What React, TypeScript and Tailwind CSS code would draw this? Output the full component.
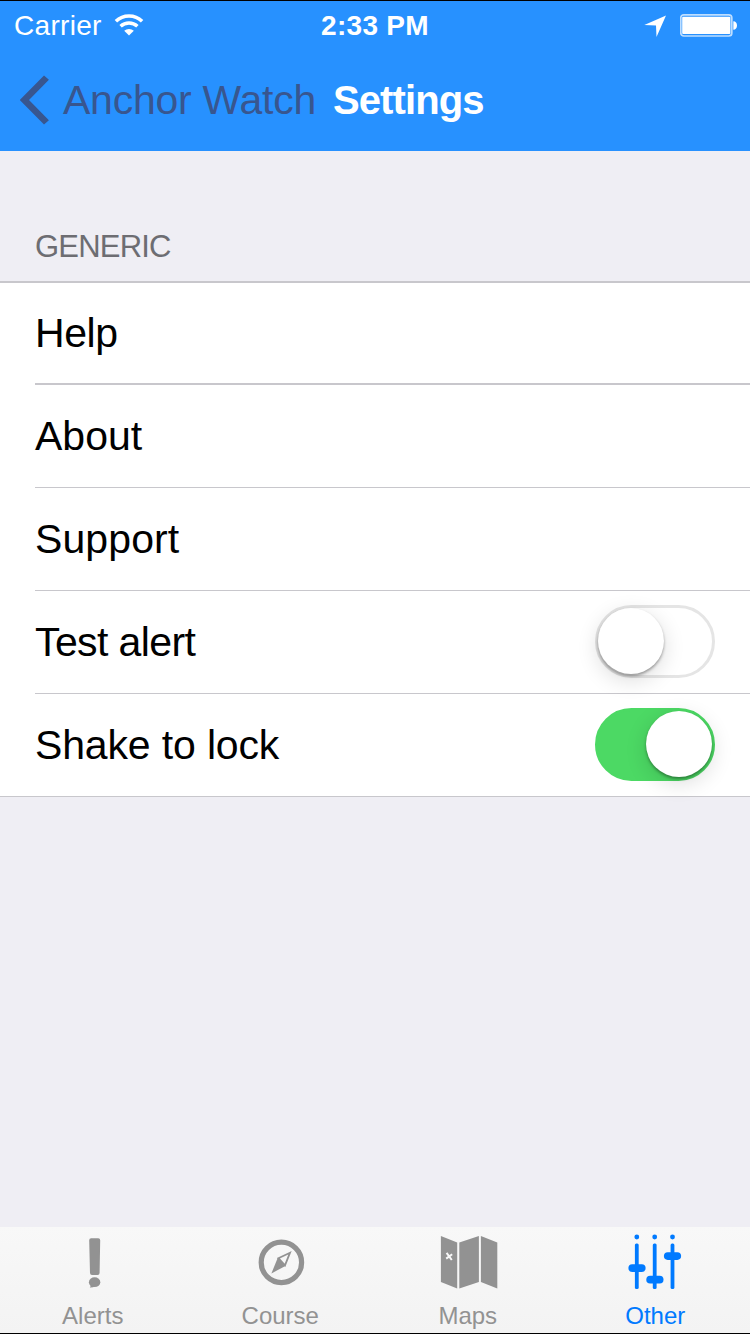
import React, { useState } from "react"

interface SettingRow {
  label: string
  tracking: string
  toggle?: "testAlert" | "shakeToLock"
}

const rows: SettingRow[] = [
  { label: "Help", tracking: "tracking-[-0.4px]" },
  { label: "About", tracking: "tracking-[0px]" },
  { label: "Support", tracking: "tracking-[0.1px]" },
  { label: "Test alert", tracking: "tracking-[-0.6px]", toggle: "testAlert" },
  { label: "Shake to lock", tracking: "tracking-[-0.15px]", toggle: "shakeToLock" },
]

const WifiIcon = () => (
  <svg width="30" height="24" viewBox="0 0 30 24" fill="none" stroke="white">
    <path d="M1.9 8.2A18.8 18.8 0 0 1 28.1 8.2" strokeWidth="3.5" />
    <path d="M6.6 13.2A12.4 12.4 0 0 1 23.4 13.2" strokeWidth="3.5" />
    <path d="M15 22.4L10.2 17.8A7 7 0 0 1 19.8 17.8Z" fill="white" stroke="none" />
  </svg>
)

const LocationIcon = () => (
  <svg width="24" height="24" viewBox="0 0 24 24" fill="white">
    <path d="M1.3 12L23 2.5L13.5 24L13 12.5Z" />
  </svg>
)

const BatteryIcon = () => (
  <svg width="58" height="24" viewBox="0 0 58 24">
    <rect x="0.8" y="1.8" width="51" height="21.2" rx="3" fill="none" stroke="white" strokeOpacity="0.7" strokeWidth="1.7" />
    <rect x="2.2" y="3.8" width="48.2" height="17.2" rx="1" fill="white" />
    <path d="M53.3 8.2C55.6 8.2 57 10 57 12.4S55.6 16.8 53.3 16.8Z" fill="white" />
  </svg>
)

const BackIcon = () => (
  <svg width="30" height="50" viewBox="0 0 30 50" fill="#38568f">
    <path d="M-0.3 25L24 0.4L28.9 4.8L9 25L28.9 45.2L24 49.6Z" />
  </svg>
)

const AlertsIcon = () => (
  <svg width="60" height="72" viewBox="0 0 60 72" fill="currentColor">
    <path d="M27.2 11.2H34.2Q36.3 11.2 36.2 13.4L35.6 46Q35.5 48 33.6 48H28Q26.1 48 26 46L25.2 13.4Q25.1 11.2 27.2 11.2Z" />
    <ellipse cx="30.6" cy="55.2" rx="5.7" ry="4.9" />
    <path d="M26.6 57.2Q27 59.5 25.8 60.5Q29 60.8 31 59Z" />
  </svg>
)

const CourseIcon = () => (
  <svg width="60" height="72" viewBox="0 0 60 72">
    <circle cx="30.4" cy="35.4" r="20.2" fill="none" stroke="currentColor" strokeWidth="5.2" />
    <path d="M39 25.7L27.4 31.2L34 38.4Z" fill="none" stroke="currentColor" strokeWidth="1.8" />
    <path d="M20.4 46.4L26.8 30.8L34.4 39Z" fill="currentColor" />
  </svg>
)

const MapsIcon = () => (
  <svg width="60" height="72" viewBox="0 0 60 72" fill="currentColor">
    <path d="M1.9 9.1L18.2 15.5V61.4L1.9 55Z" />
    <path d="M20.3 15.5L39.9 9.1V55L20.3 61.4Z" />
    <path d="M41.9 9.1L58.3 15.5V61.4L41.9 55Z" />
    <path d="M7.6 25.8L12.8 33M13.2 27.2L7.2 31.6" fill="none" stroke="#f7f7f7" strokeWidth="2" />
  </svg>
)

const OtherIcon = () => (
  <svg width="60" height="72" viewBox="0 0 60 72" fill="currentColor">
    <circle cx="10.8" cy="10" r="2.4" />
    <circle cx="28.7" cy="10" r="2.4" />
    <circle cx="46.5" cy="10" r="2.4" />
    <rect x="8.9" y="16.4" width="3.8" height="45.6" rx="1.5" />
    <rect x="26.8" y="16.4" width="3.8" height="45.6" rx="1.5" />
    <rect x="44.6" y="16.4" width="3.8" height="45.6" rx="1.5" />
    <rect x="2.4" y="37.2" width="17.2" height="7.7" rx="3.8" />
    <rect x="20.3" y="48.8" width="17.2" height="7.7" rx="3.8" />
    <rect x="37.9" y="25.2" width="17.2" height="7.7" rx="3.8" />
  </svg>
)

const tabs = [
  { label: "Alerts", icon: <AlertsIcon /> },
  { label: "Course", icon: <CourseIcon /> },
  { label: "Maps", icon: <MapsIcon /> },
  { label: "Other", icon: <OtherIcon /> },
]

const Switch: React.FC<{ label: string; on: boolean; onChange: () => void }> = ({ label, on, onChange }) => (
  <button
    role="switch"
    aria-checked={on}
    aria-label={label}
    onClick={onChange}
    className={`mb-[2px] flex h-[73px] w-[120px] items-center rounded-full border-[3px] ${
      on ? "justify-end border-[#4cd964] bg-[#4cd964]" : "justify-start border-[#e5e5e5] bg-white"
    }`}
  >
    <span className="size-[66px] rounded-full bg-white shadow-[0_2px_3px_rgba(0,0,0,0.35),0_6px_22px_rgba(0,0,0,0.14)]" />
  </button>
)

export default function App() {
  const [activeTab, setActiveTab] = useState("Other")
  const [settings, setSettings] = useState({ testAlert: false, shakeToLock: true })

  return (
    <div className="flex h-[1334px] w-[750px] flex-col overflow-hidden border-y border-black bg-[#efeef4] font-['Liberation_Sans',Arial,sans-serif] text-black">
      <header className="h-[150px] shrink-0 bg-[#2791ff] text-white">
        {/* Status bar */}
        <div className="grid h-[50px] grid-cols-3 items-center text-[28px] leading-8">
          <div className="flex items-center pl-[14px]">
            <span className="tracking-[0.3px]">Carrier</span>
            <span className="ml-3 -mt-[2px]">
              <WifiIcon />
            </span>
          </div>
          <div className="text-center font-bold tracking-[0.3px]">2:33 PM</div>
          <div className="-mt-[2px] flex items-center justify-end gap-[13px] pr-[12px]">
            <LocationIcon />
            <BatteryIcon />
          </div>
        </div>

        {/* Navigation bar */}
        <div className="flex h-[100px] items-center pb-[2px] pl-5 text-[41px] leading-[50px]">
          <button className="flex items-center gap-[13px] text-[#38568f]">
            <BackIcon />
            <span className="tracking-[-0.25px]">Anchor Watch</span>
          </button>
          <h1 className="ml-[17px] text-[40px] font-bold tracking-[-0.9px]">Settings</h1>
        </div>
      </header>

      <main className="flex-1 pt-[79px]">
        <h2 className="h-[51px] pl-[35px] text-[31px] leading-[34px] tracking-[-0.8px] text-[#6d6d72]">GENERIC</h2>
        <ul className="border-t-2 border-b border-t-[#c8c7cc] border-b-[#c8c7cc] bg-white">
          {rows.map(({ label, tracking, toggle }, i) => (
            <li key={label} className="pl-[35px]">
              <div
                className={`flex items-center justify-between border-[#c8c7cc] pr-[35px] ${
                  i === 0 ? "h-[102px] border-b-2" : i < rows.length - 1 ? "h-[103px] border-b" : "h-[102px]"
                }`}
              >
                <span className={`text-[41px] leading-[50px] ${tracking}`}>{label}</span>
                {toggle && (
                  <Switch
                    label={label}
                    on={settings[toggle]}
                    onChange={() => setSettings({ ...settings, [toggle]: !settings[toggle] })}
                  />
                )}
              </div>
            </li>
          ))}
        </ul>
      </main>

      {/* Tab bar */}
      <nav className="grid h-[106px] shrink-0 grid-cols-4 bg-linear-to-b from-[#f8f8f8] to-[#f3f3f3]">
        {tabs.map(({ label, icon }) => (
          <button
            key={label}
            onClick={() => setActiveTab(label)}
            className={`flex flex-col items-center ${activeTab === label ? "text-[#007aff]" : "text-[#929292]"}`}
          >
            {icon}
            <span className="mt-[2px] mr-[2px] text-2xl leading-[30px]">{label}</span>
          </button>
        ))}
      </nav>
    </div>
  )
}
